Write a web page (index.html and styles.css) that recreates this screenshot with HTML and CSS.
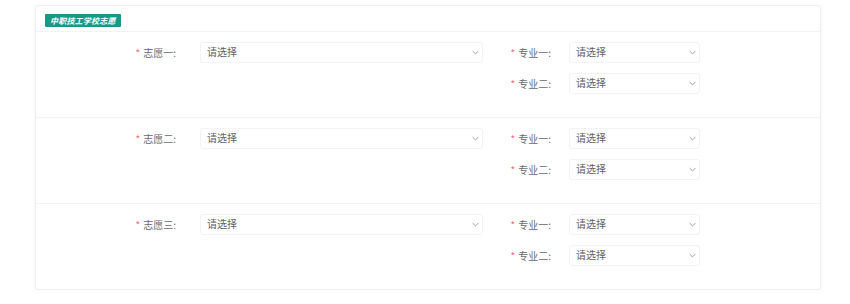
FILE: index.html
```html
<!DOCTYPE html>
<html lang="zh">
<head>
<meta charset="utf-8">
<link rel="stylesheet" href="styles.css">
</head>
<body>
<div class="card">
  <div class="card-head"><span class="badge">中职技工学校志愿</span></div>
  <div class="section">
    <div class="item main">
      <label class="lbl"><span class="req">*</span>志愿一:</label>
      <div class="select wide"><span>请选择</span><svg class="arrow" viewBox="0 0 10 6"><path d="M1 1l4 4 4-4"/></svg></div>
    </div>
    <div class="subs">
      <div class="item">
        <label class="lbl sub"><span class="req">*</span>专业一:</label>
        <div class="select narrow"><span>请选择</span><svg class="arrow" viewBox="0 0 10 6"><path d="M1 1l4 4 4-4"/></svg></div>
      </div>
      <div class="item">
        <label class="lbl sub"><span class="req">*</span>专业二:</label>
        <div class="select narrow"><span>请选择</span><svg class="arrow" viewBox="0 0 10 6"><path d="M1 1l4 4 4-4"/></svg></div>
      </div>
    </div>
  </div>
  <div class="section">
    <div class="item main">
      <label class="lbl"><span class="req">*</span>志愿二:</label>
      <div class="select wide"><span>请选择</span><svg class="arrow" viewBox="0 0 10 6"><path d="M1 1l4 4 4-4"/></svg></div>
    </div>
    <div class="subs">
      <div class="item">
        <label class="lbl sub"><span class="req">*</span>专业一:</label>
        <div class="select narrow"><span>请选择</span><svg class="arrow" viewBox="0 0 10 6"><path d="M1 1l4 4 4-4"/></svg></div>
      </div>
      <div class="item">
        <label class="lbl sub"><span class="req">*</span>专业二:</label>
        <div class="select narrow"><span>请选择</span><svg class="arrow" viewBox="0 0 10 6"><path d="M1 1l4 4 4-4"/></svg></div>
      </div>
    </div>
  </div>
  <div class="section last">
    <div class="item main">
      <label class="lbl"><span class="req">*</span>志愿三:</label>
      <div class="select wide"><span>请选择</span><svg class="arrow" viewBox="0 0 10 6"><path d="M1 1l4 4 4-4"/></svg></div>
    </div>
    <div class="subs">
      <div class="item">
        <label class="lbl sub"><span class="req">*</span>专业一:</label>
        <div class="select narrow"><span>请选择</span><svg class="arrow" viewBox="0 0 10 6"><path d="M1 1l4 4 4-4"/></svg></div>
      </div>
      <div class="item">
        <label class="lbl sub"><span class="req">*</span>专业二:</label>
        <div class="select narrow"><span>请选择</span><svg class="arrow" viewBox="0 0 10 6"><path d="M1 1l4 4 4-4"/></svg></div>
      </div>
    </div>
  </div>
</div>
</body>
</html>
```
FILE: styles.css
```css
* { box-sizing: border-box; }
html, body { margin: 0; padding: 0; background: #fff; }
body {
  font-family: "Noto Sans CJK SC", "Noto Sans", sans-serif;
  color: #606266;
  padding: 5px 0 0 35px;
}
.card {
  width: 786px;
  height: 285px;
  border: 1px solid #ebeef5;
  border-radius: 3px;
  box-shadow: 0 1px 3px rgba(0,0,0,0.06);
  background: #fff;
}
.card-head {
  height: 26px;
  border-bottom: 1px solid #f2f3f6;
  padding: 4px 0 0 9px;
  display: flex;
  align-items: center;
}
.badge {
  display: block;
  background: #17998a;
  color: #fff;
  font-size: 8px;
  font-weight: bold;
  font-style: italic;
  line-height: 13px;
  height: 13px;
  padding: 0 5px;
  letter-spacing: 0.2px;
  border-radius: 1px;
}
.section {
  height: 86px;
  border-bottom: 1px solid #f2f3f6;
  display: flex;
  padding-top: 10px;
}
.section.last { border-bottom: none; }
.item {
  display: flex;
  align-items: center;
  height: 21px;
}
.subs {
  display: flex;
  flex-direction: column;
  gap: 10px;
}
.lbl {
  font-size: 10px;
  color: #666a70;
  text-align: right;
  white-space: nowrap;
}
.main .lbl {
  width: 164px;
  padding-right: 24px;
}
.lbl.sub {
  width: 86px;
  padding-right: 18px;
}
.req {
  color: #f56c6c;
  margin-right: 3px;
}
.select {
  height: 21px;
  border: 1px solid #f2f3f6;
  border-radius: 3px;
  display: flex;
  align-items: center;
  justify-content: space-between;
  padding: 0 3px 0 6px;
  font-size: 10px;
  color: #606266;
  background: #fff;
}
.select span { line-height: 1; margin-top: -2px; }
.wide { width: 283px; }
.narrow { width: 131px; }
.arrow {
  width: 7px;
  height: 5px;
  fill: none;
  stroke: #909399;
  stroke-width: 1.3;
}
```
